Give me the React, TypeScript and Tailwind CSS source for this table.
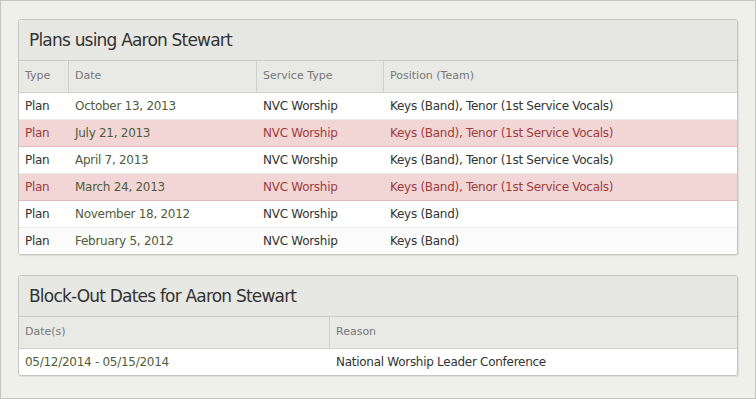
import React from "react";

type Plan = {
  date: string;
  service: string;
  position: string;
  declined?: boolean;
};

const plans: Plan[] = [
  { date: "October 13, 2013", service: "NVC Worship", position: "Keys (Band), Tenor (1st Service Vocals)" },
  { date: "July 21, 2013", service: "NVC Worship", position: "Keys (Band), Tenor (1st Service Vocals)", declined: true },
  { date: "April 7, 2013", service: "NVC Worship", position: "Keys (Band), Tenor (1st Service Vocals)" },
  { date: "March 24, 2013", service: "NVC Worship", position: "Keys (Band), Tenor (1st Service Vocals)", declined: true },
  { date: "November 18, 2012", service: "NVC Worship", position: "Keys (Band)" },
  { date: "February 5, 2012", service: "NVC Worship", position: "Keys (Band)" },
];

function PanelTitle({ children }: { children: React.ReactNode }) {
  return (
    <div className="flex h-[41px] items-center border-b border-[#c9c9c6] bg-[#e7e7e4] px-[10px] text-[#333]">
      <h2 className="text-[17px] leading-none tracking-[-0.8px]">{children}</h2>
    </div>
  );
}

const headCell =
  "flex h-[32px] items-center border-b border-[#cfcfcc] bg-[#e9e9e6] px-[6px] text-[11px] text-[#777]";
const bodyCell = "flex items-center px-[6px] text-[12px] tracking-[-0.28px]";

export default function App() {
  return (
    <div
      className="h-[399px] w-[756px] border border-[#c4c4c0] bg-[#f0f0eb] px-[17px] pt-[18px]"
      style={{ fontFamily: '"DejaVu Sans", Verdana, sans-serif' }}
    >
      {/* Plans */}
      <div className="overflow-hidden rounded-[3px] border border-[#c4c4c0] bg-white shadow-[1px_1px_1px_rgba(0,0,0,0.08)]">
        <PanelTitle>Plans using Aaron Stewart</PanelTitle>
        <div className="grid grid-cols-[50px_188px_127px_1fr]">
          {["Type", "Date", "Service Type", "Position (Team)"].map((h, i) => (
            <div key={h} className={`${headCell} ${i < 3 ? "border-r" : ""}`}>
              {h}
            </div>
          ))}
          {plans.map((p, idx) => {
            const last = idx === plans.length - 1;
            const row = p.declined
              ? "h-[27px] border-b bg-[#f2d6d6] border-[#e2b8b8] text-[#9e3c3c]"
              : last
              ? "h-[26px] bg-[#fbfbfb] text-[#333]"
              : "h-[27px] border-b bg-white border-[#ebebea] text-[#333]";
            return (
              <React.Fragment key={p.date}>
                <div className={`${bodyCell} ${row}`}>Plan</div>
                <div className={`${bodyCell} ${row} !text-[#4f5c3a]`}>{p.date}</div>
                <div className={`${bodyCell} ${row}`}>{p.service}</div>
                <div className={`${bodyCell} ${row}`}>{p.position}</div>
              </React.Fragment>
            );
          })}
        </div>
      </div>

      {/* Block-out dates */}
      <div className="mt-[20px] overflow-hidden rounded-[3px] border border-[#c4c4c0] bg-white shadow-[1px_1px_1px_rgba(0,0,0,0.08)]">
        <PanelTitle>Block-Out Dates for Aaron Stewart</PanelTitle>
        <div className="grid grid-cols-[311px_1fr]">
          {["Date(s)", "Reason"].map((h, i) => (
            <div key={h} className={`${headCell} ${i === 0 ? "border-r" : ""}`}>
              {h}
            </div>
          ))}
          <div className={`${bodyCell} h-[26px] text-[#4f5c3a]`}>05/12/2014 - 05/15/2014</div>
          <div className={`${bodyCell} h-[26px] text-[#333]`}>National Worship Leader Conference</div>
        </div>
      </div>
    </div>
  );
}
